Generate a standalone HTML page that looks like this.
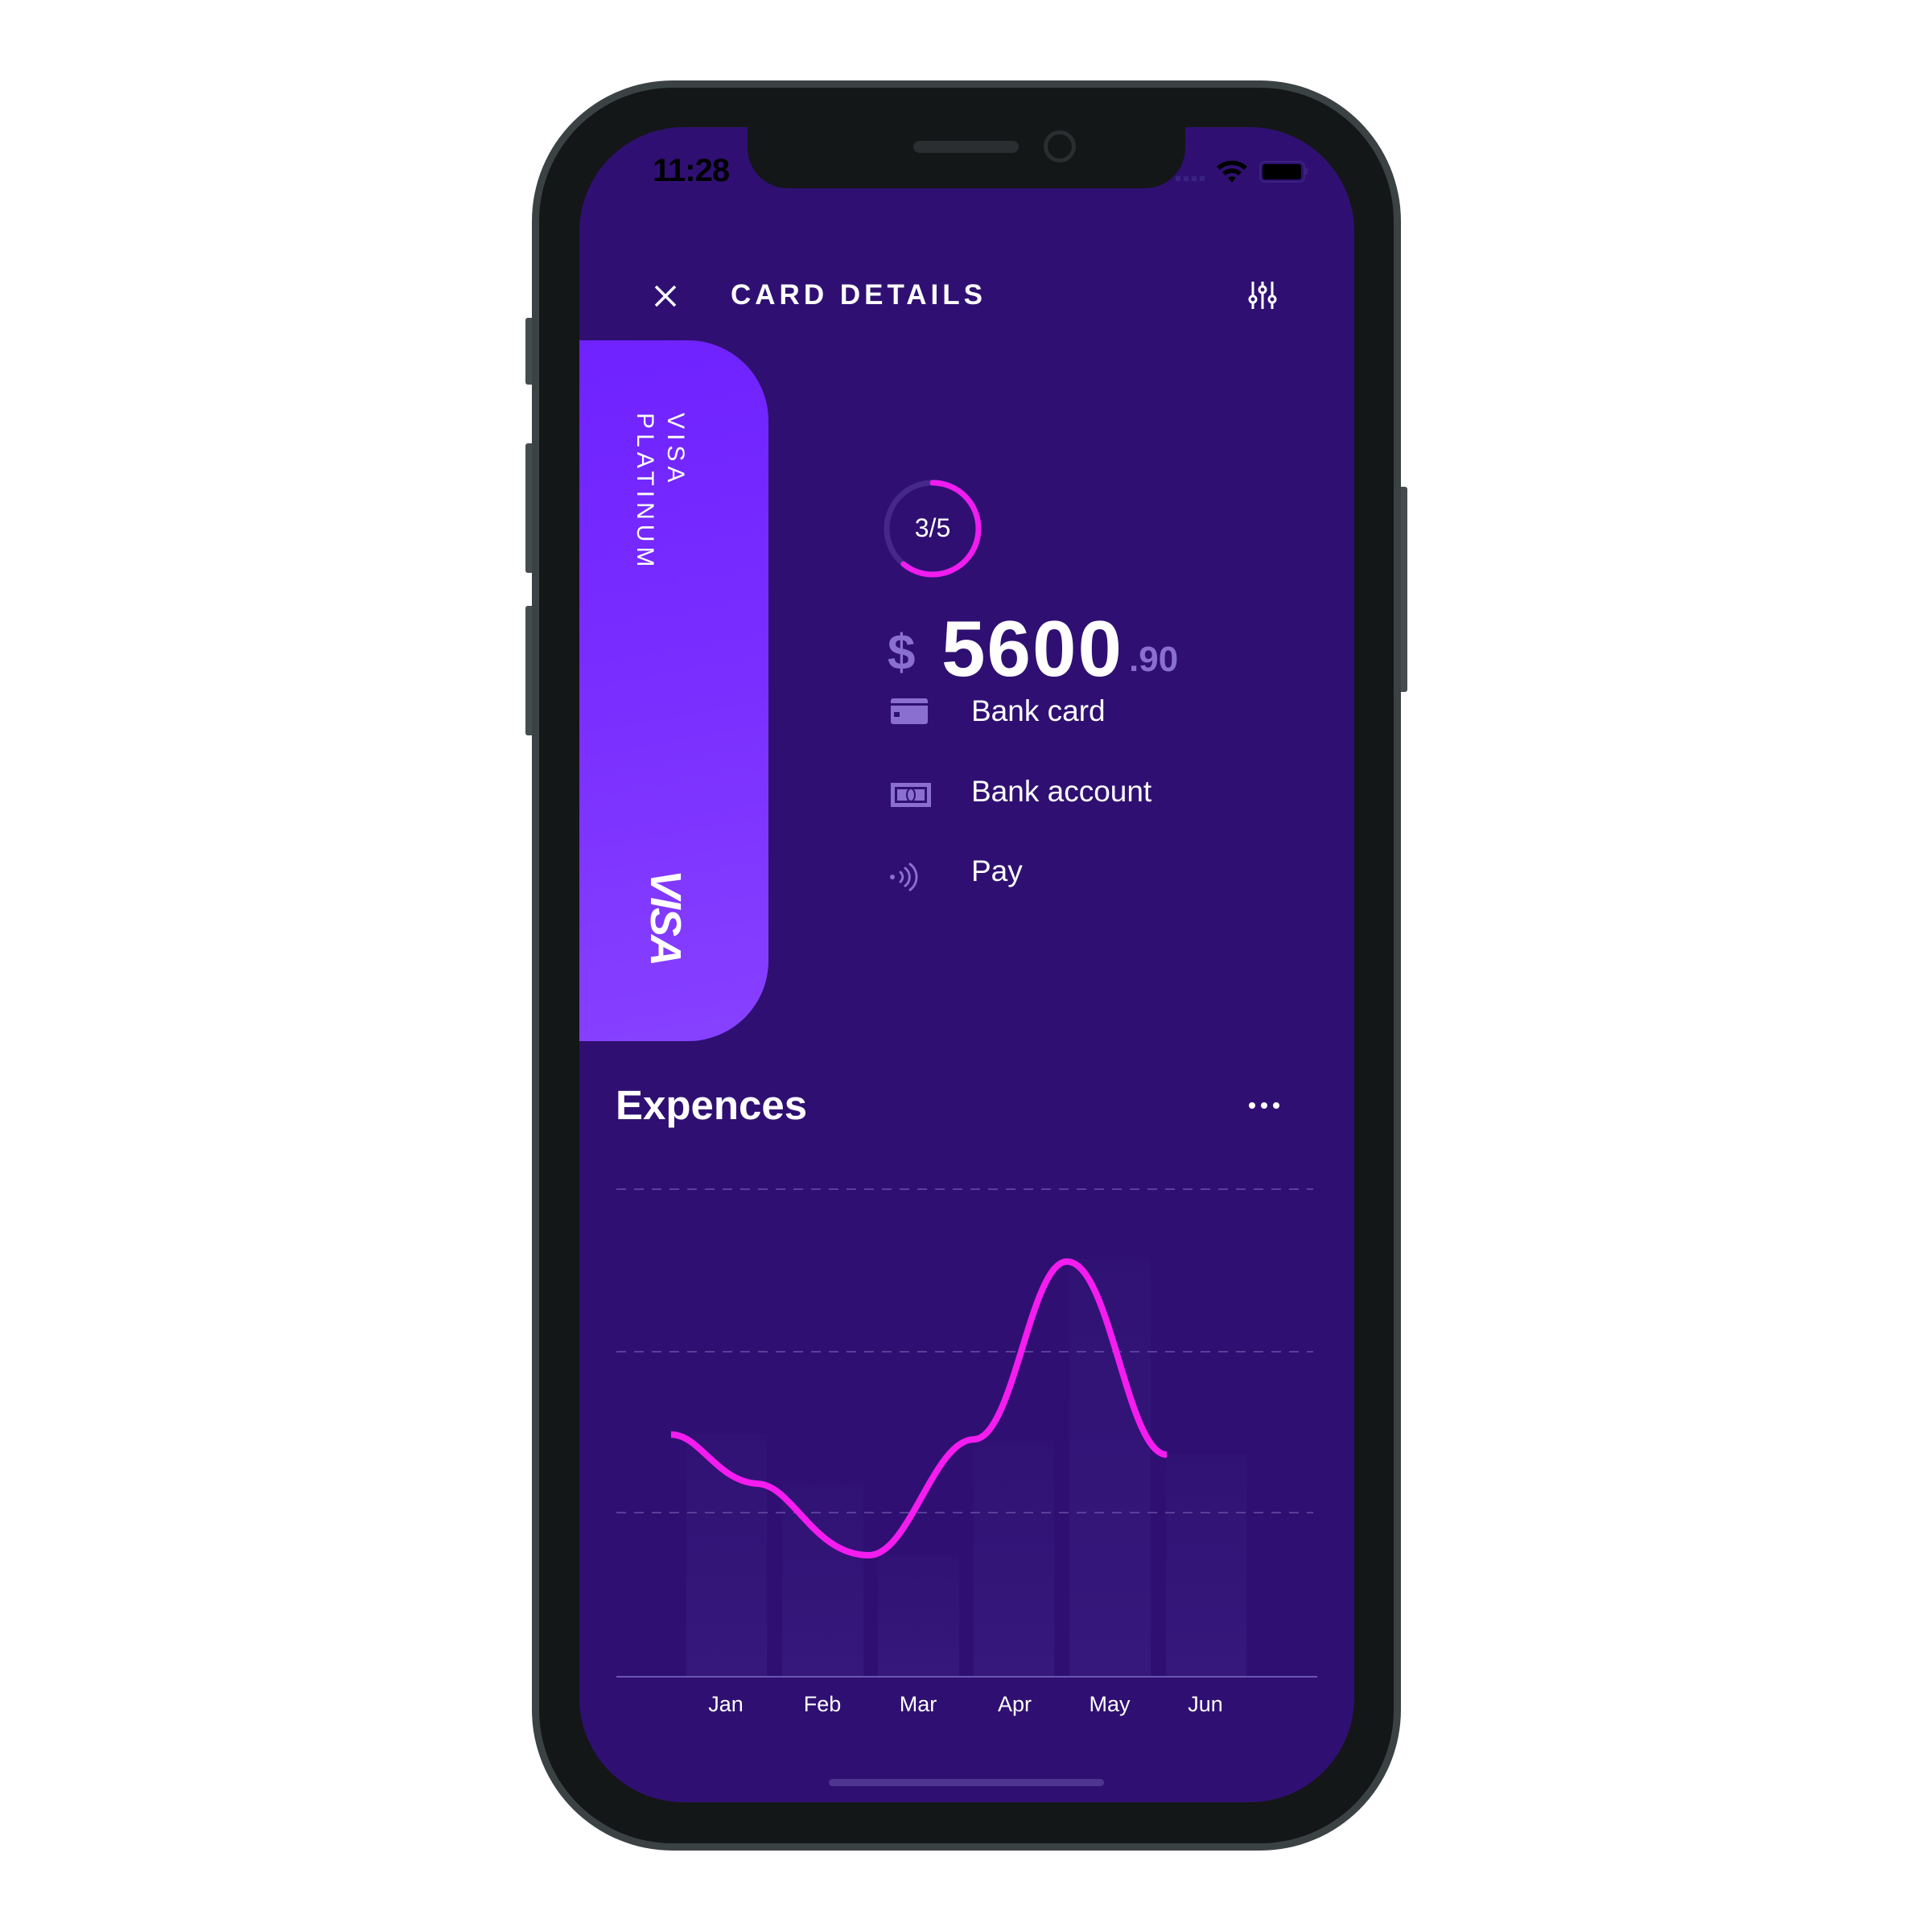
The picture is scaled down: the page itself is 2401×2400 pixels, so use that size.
<!DOCTYPE html>
<html><head><meta charset="utf-8"><style>
html,body{margin:0;padding:0;background:#fff;}
body{width:2401px;height:2400px;position:relative;overflow:hidden;font-family:"Liberation Sans",sans-serif;}
.a{position:absolute;}
</style></head><body>
<div class="a" style="left:653px;top:395px;width:12px;height:83px;background:#454c4e;border-radius:3px"></div>
<div class="a" style="left:653px;top:551px;width:12px;height:161px;background:#454c4e;border-radius:3px"></div>
<div class="a" style="left:653px;top:753px;width:12px;height:161px;background:#454c4e;border-radius:3px"></div>
<div class="a" style="left:1737px;top:605px;width:12px;height:255px;background:#454c4e;border-radius:3px"></div>
<div class="a" style="left:661px;top:100px;width:1080px;height:2200px;background:#3b4244;border-radius:175px"></div>
<div class="a" style="left:670px;top:109px;width:1062px;height:2182px;background:#141717;border-radius:166px"></div>
<div class="a" style="left:720px;top:158px;width:963px;height:2082px;background:#2f1072;border-radius:130px;overflow:hidden">
  <div class="a" style="left:0;top:265px;width:235px;height:871px;border-radius:0 100px 100px 0;background:linear-gradient(170deg,#6f22ff 0%,#7a2eff 50%,#8741ff 100%)"></div>
</div>
<div class="a" style="left:929px;top:150px;width:544px;height:84px;background:#141717;border-radius:0 0 50px 50px"></div>
<div class="a" style="left:1135px;top:175px;width:131px;height:15px;background:#2a2e30;border-radius:8px"></div>
<div class="a" style="left:1297px;top:162px;width:40px;height:40px;box-sizing:border-box;border:5px solid #2a2e30;border-radius:50%"></div>
<div class="a" style="left:811px;top:190px;font-size:40px;font-weight:bold;color:#000;letter-spacing:-1px">11:28</div>
<svg class="a" style="left:1460px;top:195px" width="170" height="36" viewBox="1460 195 170 36">
  <g fill="#3a2280"><rect x="1461" y="219" width="6" height="6"/><rect x="1471" y="219" width="6" height="6"/><rect x="1481" y="219" width="6" height="6"/><rect x="1491" y="219" width="6" height="6"/></g>
  <path d="M1512 207 A28 28 0 0 1 1550 207 L1546 211 A22 22 0 0 0 1516 211Z M1519 214 A18 18 0 0 1 1543 214 L1539 218 A12 12 0 0 0 1523 218Z M1526 221 A8 8 0 0 1 1536 221 L1531 227Z" fill="#000"/>
  <rect x="1566" y="201" width="55" height="25" rx="6" fill="none" stroke="#3a2280" stroke-width="2"/>
  <rect x="1569" y="204" width="48" height="19" rx="3" fill="#000"/>
  <rect x="1622" y="209" width="3" height="8" fill="#3a2280"/>
</svg>
<svg class="a" style="left:812px;top:353px" width="30" height="30"><path d="M3 3 L27 27 M27 3 L3 27" stroke="#fff" stroke-width="3.5"/></svg>
<div class="a" style="left:908px;top:347px;font-size:35px;font-weight:bold;color:#fff;letter-spacing:5px">CARD DETAILS</div>
<svg class="a" style="left:1550px;top:348px" width="40" height="38"><g stroke="#fff" stroke-width="3" fill="#2f1072"><line x1="7" y1="2" x2="7" y2="36"/><line x1="19" y1="2" x2="19" y2="36"/><line x1="31" y1="2" x2="31" y2="36"/><circle cx="7" cy="24" r="4"/><circle cx="19" cy="12" r="4"/><circle cx="31" cy="24" r="4"/></g></svg>
<div class="a" style="left:782px;top:513px;writing-mode:vertical-rl;font-size:30px;line-height:38px;color:#fff;letter-spacing:6px">VISA<br>PLATINUM</div>
<div class="a" style="left:765px;top:1115px;width:124px;height:50px;transform:rotate(90deg);font-size:54px;line-height:50px;font-weight:bold;font-style:italic;color:#fff;text-align:center;letter-spacing:-2px">VISA</div>
<svg class="a" style="left:1095px;top:593px" width="128" height="128"><circle cx="64" cy="64" r="57" fill="none" stroke="#45288a" stroke-width="7"/><circle cx="64" cy="64" r="57" fill="none" stroke="#f01cf0" stroke-width="7" stroke-dasharray="218 400" transform="rotate(-90 64 64)" stroke-linecap="round"/></svg>
<div class="a" style="left:1095px;top:638px;width:128px;text-align:center;font-size:32px;color:#fff">3/5</div>
<div class="a" style="left:1103px;top:776px;font-size:62px;font-weight:bold;color:#8a6fd0">$</div>
<div class="a" style="left:1170px;top:750px;font-size:98px;font-weight:bold;color:#fff;letter-spacing:2px">5600</div>
<div class="a" style="left:1403px;top:795px;font-size:44px;font-weight:bold;color:#8a6fd0">.90</div>
<svg class="a" style="left:1100px;top:860px" width="70" height="260"><g fill="#8b6fd0">
<path d="M10 8 h40 a3 3 0 0 1 3 3 v3 h-46 v-3 a3 3 0 0 1 3 -3Z M7 17 h46 v20 a3 3 0 0 1 -3 3 h-40 a3 3 0 0 1 -3 -3Z"/>
<rect x="11" y="25" width="7" height="6" fill="#2f1072"/>
<rect x="7" y="113" width="50" height="30"/><rect x="12" y="118" width="40" height="20" fill="#2f1072"/><rect x="15" y="121" width="34" height="14"/><ellipse cx="32" cy="128" rx="5" ry="8" fill="none" stroke="#2f1072" stroke-width="2"/>
</g>
<g stroke="#8b6fd0" stroke-width="3" fill="none" stroke-linecap="round"><path d="M19 224 a8 8 0 0 1 0 12"/><path d="M25 219 a14 14 0 0 1 0 22"/><path d="M31 214 a20 20 0 0 1 0 32"/></g>
<circle cx="9" cy="230" r="3" fill="#8b6fd0"/></svg>
<div class="a" style="left:1207px;top:863px;font-size:37px;color:#fff">Bank card</div>
<div class="a" style="left:1207px;top:963px;font-size:37px;color:#fff">Bank account</div>
<div class="a" style="left:1207px;top:1062px;font-size:37px;color:#fff">Pay</div>
<div class="a" style="left:765px;top:1344px;font-size:51px;font-weight:bold;color:#fff">Expences</div>
<svg class="a" style="left:1550px;top:1364px" width="44" height="20"><g fill="#fff"><circle cx="6" cy="10" r="4"/><circle cx="21" cy="10" r="4"/><circle cx="36" cy="10" r="4"/></g></svg>
<svg class="a" style="left:0;top:0" width="2401" height="2400">
<defs><linearGradient id="bg" x1="0" y1="0" x2="0" y2="1"><stop offset="0" stop-color="#34177a" stop-opacity="0.3"/><stop offset="1" stop-color="#36187c" stop-opacity="1"/></linearGradient></defs>
<g fill="url(#bg)">
<rect x="853" y="1782" width="100" height="301"/><rect x="972" y="1843" width="101" height="240"/><rect x="1091" y="1932" width="101" height="151"/><rect x="1210" y="1791" width="100" height="292"/><rect x="1329" y="1565" width="101" height="518"/><rect x="1449" y="1807" width="100" height="276"/>
</g>
<g stroke="#5a3f99" stroke-width="2" stroke-dasharray="12 10"><line x1="766" y1="1478" x2="1632" y2="1478"/><line x1="766" y1="1680" x2="1632" y2="1680"/><line x1="766" y1="1880" x2="1632" y2="1880"/></g>
<line x1="766" y1="2084" x2="1637" y2="2084" stroke="#6d55b0" stroke-width="2"/>
<path d="M834 1783 C870 1783 890 1840 940 1844 C985 1844 1010 1933 1080 1933 C1130 1933 1160 1790 1210 1789 C1260 1789 1280 1568 1326 1568 C1380 1568 1400 1807 1450 1808" fill="none" stroke="#f51cf0" stroke-width="8"/>
<g font-family="Liberation Sans, sans-serif" font-size="27" fill="#fff" text-anchor="middle">
<text x="902" y="2127">Jan</text><text x="1022" y="2127">Feb</text><text x="1141" y="2127">Mar</text><text x="1261" y="2127">Apr</text><text x="1379" y="2127">May</text><text x="1498" y="2127">Jun</text>
</g>
<rect x="1030" y="2211" width="342" height="9" rx="4.5" fill="#4e3590"/>
</svg>
</body></html>
